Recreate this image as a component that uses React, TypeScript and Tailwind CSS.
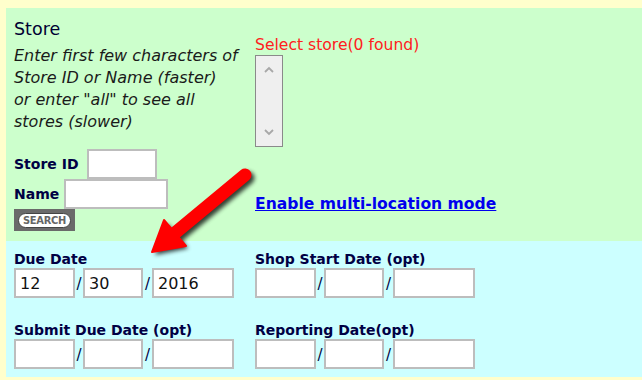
import React from "react";

function DateRow({ values }: { values?: string[] }) {
  const v = values ?? ["", "", ""];
  const inputCls =
    "h-[30px] border-2 border-[#bdbdbd] bg-white px-[4px] text-[16px] text-[#111] outline-none font-['DejaVu_Sans',Verdana,sans-serif]";
  return (
    <div className="flex items-baseline">
      <input readOnly defaultValue={v[0]} className={`w-[61px] ${inputCls}`} />
      <span className="w-[8px] text-center text-[15px] text-[#000040]">/</span>
      <input readOnly defaultValue={v[1]} className={`w-[60px] ${inputCls}`} />
      <span className="w-[9px] text-center text-[15px] text-[#000040]">/</span>
      <input readOnly defaultValue={v[2]} className={`w-[82px] ${inputCls}`} />
    </div>
  );
}

function Label({ children }: { children: React.ReactNode }) {
  return (
    <div className="text-[14px] leading-[16px] font-bold text-[#000044]">{children}</div>
  );
}

export default function App() {
  return (
    <div className="relative w-[642px] h-[380px] overflow-hidden bg-[#ffffcc] pt-[8px] pl-[6px] font-['DejaVu_Sans',Verdana,sans-serif]">
      {/* Store section */}
      <div className="flex h-[233px] bg-[#ccffcc] pl-[8px]">
        <div className="w-[241px] pt-[11px]">
          <div className="text-[17.5px] leading-[20px] text-[#000033]">Store</div>
          <div className="mt-[6px] text-[16px] leading-[22px] italic text-[#1a1a1a]">
            Enter first few characters of
            <br />
            Store ID or Name (faster)
            <br />
            or enter "all" to see all
            <br />
            stores (slower)
          </div>
          <div className="mt-[16px] flex items-center">
            <span className="text-[14px] font-bold text-[#000044]">Store ID</span>
            <input readOnly className="ml-[8px] w-[70px] h-[30px] border-2 border-[#bdbdbd] bg-white outline-none" />
          </div>
          <div className="flex items-center">
            <span className="text-[14px] font-bold text-[#000044]">Name</span>
            <input readOnly className="ml-[5px] w-[104px] h-[30px] border-2 border-[#bdbdbd] bg-white outline-none" />
          </div>
          <div className="flex h-[22px] w-[61px] items-center justify-center bg-[#6a6a6a]">
            <span className="rounded-full border border-[#444] bg-white px-[4px] text-[11px] leading-[13px] font-bold text-[#666] font-['DejaVu_Sans_Condensed','DejaVu_Sans',sans-serif] tracking-[-0.3px]">
              SEARCH
            </span>
          </div>
        </div>
        <div className="pt-[28px]">
          <div className="text-[15.6px] leading-[19px] text-[#ff2020]">Select store(0 found)</div>
          <div className="h-[92px] w-[28px] border border-[#8a8a8a] bg-[#efefef]">
            <svg width="26" height="90" viewBox="0 0 26 90" className="block">
              <path d="M9 16 L13 12 L17 16" fill="none" stroke="#a8a8a8" strokeWidth="1.8" />
              <path d="M9 74 L13 78 L17 74" fill="none" stroke="#a8a8a8" strokeWidth="1.8" />
            </svg>
          </div>
          <a href="#" className="mt-[48px] block text-[15.6px] leading-[19px] font-bold text-[#0000ee] underline">
            Enable multi-location mode
          </a>
        </div>
      </div>

      {/* Dates section */}
      <div className="flex h-[136px] bg-[#ccffff] pl-[8px] pt-[10px]">
        <div className="w-[241px]">
          <Label>Due Date</Label>
          <div className="mt-[1px]">
            <DateRow values={["12", "30", "2016"]} />
          </div>
          <div className="mt-[24px]">
            <Label>Submit Due Date (opt)</Label>
          </div>
          <div className="mt-[1px]">
            <DateRow />
          </div>
        </div>
        <div>
          <Label>Shop Start Date (opt)</Label>
          <div className="mt-[1px]">
            <DateRow />
          </div>
          <div className="mt-[24px]">
            <Label>Reporting Date(opt)</Label>
          </div>
          <div className="mt-[1px]">
            <DateRow />
          </div>
        </div>
      </div>

      {/* Red arrow annotation */}
      <svg className="pointer-events-none absolute left-0 top-0" width="642" height="380" viewBox="0 0 642 380">
        <defs>
          <filter id="shadow" x="-20%" y="-20%" width="140%" height="140%">
            <feGaussianBlur stdDeviation="2.2" />
          </filter>
        </defs>
        <g transform="translate(3,3)" opacity="0.75" filter="url(#shadow)">
          <line x1="245" y1="175" x2="175" y2="233" stroke="#000" strokeWidth="13" strokeLinecap="round" />
          <polygon points="152,252 185.3,245.3 164.8,220.7" fill="#000" />
        </g>
        <line x1="245" y1="175" x2="175" y2="233" stroke="#ff0000" strokeWidth="13" strokeLinecap="round" />
        <polygon points="152,252 186,246 164,220" fill="#ff0000" strokeLinejoin="round" stroke="#ff0000" strokeWidth="2" />
      </svg>
    </div>
  );
}
